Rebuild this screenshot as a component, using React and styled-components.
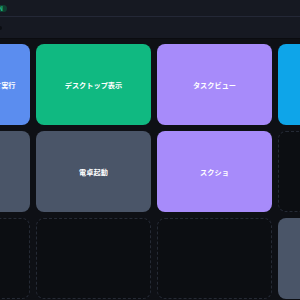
import React from 'react';
import styled, {createGlobalStyle} from 'styled-components';

const GlobalStyle = createGlobalStyle`
  html, body {
    margin: 0;
    padding: 0;
    background: #0e1015;
  }
  body {
    font-family: "Noto Sans CJK JP", "Noto Sans", sans-serif;
  }
`;

// labels of the keys whose text lies outside the view are left empty
const slots = [
  {label: 'ファイル名を指定して実行', color: '#5b8def'},
  {label: 'デスクトップ表示', color: '#10b981'},
  {label: 'タスクビュー', color: '#a78bfa'},
  {label: '', color: '#0ea5e9'},
  {label: '', color: '#4a5568'},
  {label: '電卓起動', color: '#4a5568'},
  {label: 'スクショ', color: '#a78bfa'},
  null,
  null,
  null,
  null,
  {label: '', color: '#4a5568'},
];

function App() {
  return (
    <Page>
      <GlobalStyle />
      <TopBar>
        <StatusPill>ON</StatusPill>
      </TopBar>
      <ToolBar>
        <ToolEdge />
      </ToolBar>
      <Grid>
        {slots.map((slot, i) =>
          slot ? (
            <Key key={i} $color={slot.color}>{slot.label}</Key>
          ) : (
            <EmptyKey key={i} />
          )
        )}
      </Grid>
    </Page>
  );
}

const Page = styled.div`
  width: 300px;
  height: 300px;
  overflow: hidden;
  background: #0e1015;
`;

const TopBar = styled.header`
  height: 16px;
  background: #161922;
  border-bottom: 1px solid #242837;
  display: flex;
  align-items: center;
`;

const StatusPill = styled.span`
  margin-left: -10px;
  height: 7px;
  padding: 0 4px;
  border-radius: 4px;
  background: #0f3f31;
  color: #22c58b;
  font-size: 6px;
  font-weight: 700;
  line-height: 7px;
`;

const ToolBar = styled.div`
  height: 21px;
  background: #161922;
  border-bottom: 1px solid #0b0c10;
  display: flex;
  align-items: center;
`;

const ToolEdge = styled.span`
  width: 2px;
  height: 4px;
  border-radius: 0 2px 2px 0;
  background: #0b0d12;
`;

const Grid = styled.main`
  display: grid;
  grid-template-columns: repeat(4, 115px);
  grid-auto-rows: 81px;
  gap: 6px;
  padding-top: 5px;
  margin-left: -85px;
`;

const Key = styled.div`
  background: ${p => p.$color};
  border-radius: 8px;
  display: flex;
  align-items: center;
  justify-content: center;
  color: #ffffff;
  font-size: 7.2px;
  font-weight: 700;
  white-space: nowrap;
`;

const EmptyKey = styled.div`
  border: 1px dashed #252a35;
  border-radius: 8px;
  background: #0c0e12;
`;

export default App;
